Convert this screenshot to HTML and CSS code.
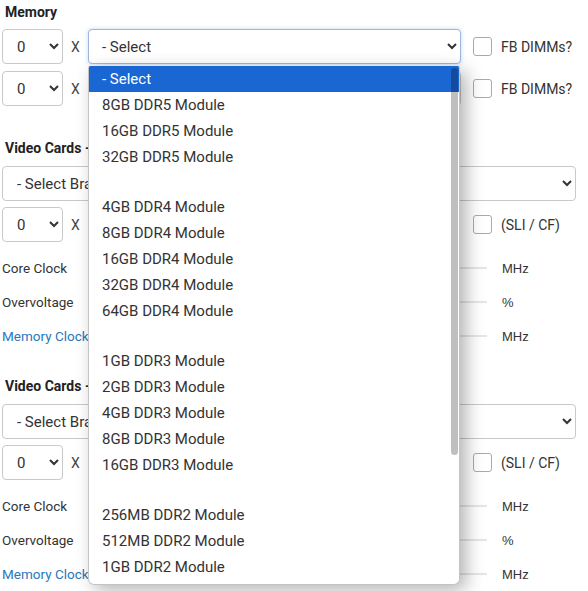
FILE: index.html
```html
<!DOCTYPE html>
<html lang="en">
<head>
  <meta charset="UTF-8">
  <title>PSU Calculator</title>
  <link rel="stylesheet" href="styles.css">
</head>
<body>
  <div class="calc">
    <section class="group group-memory">
      <h3 class="group-title">Memory</h3>
      <div class="part-row">
        <select class="qty"><option>0</option><option>1</option><option>2</option></select>
        <span class="times">X</span>
        <select class="part is-open"><option>- Select</option></select>
        <label class="check"><input type="checkbox"><span>FB DIMMs?</span></label>
      </div>
      <div class="part-row">
        <select class="qty"><option>0</option><option>1</option><option>2</option></select>
        <span class="times">X</span>
        <select class="part"><option>- Select</option></select>
        <label class="check"><input type="checkbox"><span>FB DIMMs?</span></label>
      </div>
    </section>

    <section class="group">
      <h3 class="group-title">Video Cards - 1</h3>
      <select class="brand"><option>- Select Brand -</option></select>
      <div class="part-row">
        <select class="qty"><option>0</option><option>1</option><option>2</option></select>
        <span class="times">X</span>
        <select class="part part-model"><option>- Select Model -</option></select>
        <label class="check"><input type="checkbox"><span>(SLI / CF)</span></label>
      </div>
      <div class="tune">
        <div class="tune-row"><span class="tune-label">Core Clock</span><input type="range" class="slider"><span class="unit">MHz</span></div>
        <div class="tune-row"><span class="tune-label">Overvoltage</span><input type="range" class="slider"><span class="unit">%</span></div>
        <div class="tune-row"><a href="#" class="tune-label link">Memory Clock</a><input type="range" class="slider"><span class="unit">MHz</span></div>
      </div>
    </section>

    <section class="group">
      <h3 class="group-title">Video Cards - 2</h3>
      <select class="brand"><option>- Select Brand -</option></select>
      <div class="part-row">
        <select class="qty"><option>0</option><option>1</option><option>2</option></select>
        <span class="times">X</span>
        <select class="part part-model"><option>- Select Model -</option></select>
        <label class="check"><input type="checkbox"><span>(SLI / CF)</span></label>
      </div>
      <div class="tune">
        <div class="tune-row"><span class="tune-label">Core Clock</span><input type="range" class="slider"><span class="unit">MHz</span></div>
        <div class="tune-row"><span class="tune-label">Overvoltage</span><input type="range" class="slider"><span class="unit">%</span></div>
        <div class="tune-row"><a href="#" class="tune-label link">Memory Clock</a><input type="range" class="slider"><span class="unit">MHz</span></div>
      </div>
    </section>
  </div>

  <!-- open option list of the first memory select -->
  <div class="menu">
    <div class="menu-item active">- Select</div>
    <div class="menu-item">8GB DDR5 Module</div>
    <div class="menu-item">16GB DDR5 Module</div>
    <div class="menu-item">32GB DDR5 Module</div>
    <div class="menu-item empty"></div>
    <div class="menu-item">4GB DDR4 Module</div>
    <div class="menu-item">8GB DDR4 Module</div>
    <div class="menu-item">16GB DDR4 Module</div>
    <div class="menu-item">32GB DDR4 Module</div>
    <div class="menu-item">64GB DDR4 Module</div>
    <div class="menu-item empty"></div>
    <div class="menu-item">1GB DDR3 Module</div>
    <div class="menu-item">2GB DDR3 Module</div>
    <div class="menu-item">4GB DDR3 Module</div>
    <div class="menu-item">8GB DDR3 Module</div>
    <div class="menu-item">16GB DDR3 Module</div>
    <div class="menu-item empty"></div>
    <div class="menu-item">256MB DDR2 Module</div>
    <div class="menu-item">512MB DDR2 Module</div>
    <div class="menu-item">1GB DDR2 Module</div>
    <div class="menu-thumb"></div>
  </div>
</body>
</html>
```

FILE: styles.css
```css
body {
  margin: 0;
  padding: 2px 0 0 2px;
  font-family: Roboto, "Liberation Sans", Arial, sans-serif;
  color: #333;
  background: #fff;
  overflow: hidden;
}

.calc {
  width: 574px;
}

.group {
  margin-bottom: 23px;
}

.group-memory {
  margin-bottom: 32px;
}

.group-title {
  margin: 0;
  padding-left: 3px;
  font-size: 14px;
  line-height: 20px;
  font-weight: bold;
  color: #222;
}

select {
  height: 35px;
  font-family: Roboto, "Liberation Sans", Arial, sans-serif;
  font-size: 15px;
  color: #333;
  background: #fff;
  border: 1px solid #c9c9c9;
  border-radius: 4px;
  padding: 0 0 0 9px;
  outline: none;
}

.brand {
  display: block;
  width: 574px;
  margin-top: 8px;
  padding-left: 10px;
}

.part-row {
  display: flex;
  align-items: center;
  margin-top: 7px;
}

.brand + .part-row {
  margin-top: 6px;
}

.qty {
  width: 61px;
  padding-left: 10px;
}

.times {
  width: 9px;
  margin: 0 8px;
  font-size: 14px;
  color: #444;
}

.part {
  width: 373px;
}

.part-model {
  width: 360px;
}

.part-model + .check {
  margin-left: 25px;
}

.part.is-open {
  border-color: #9db7da;
  box-shadow: 0 0 4px rgba(80, 140, 220, 0.35);
}

.check {
  display: flex;
  align-items: center;
  margin-left: 12px;
  font-size: 14px;
  color: #333;
}

.check input {
  appearance: none;
  width: 19px;
  height: 19px;
  margin: 0 9px 0 0;
  border: 1.5px solid #aaa;
  border-radius: 3px;
  background: #fff;
}

.tune {
  margin-top: 9px;
}

.tune-row {
  display: grid;
  grid-template-columns: 77px 393px auto;
  column-gap: 15px;
  align-items: center;
  height: 34px;
}

.tune-label {
  font-size: 13.5px;
  color: #333;
  white-space: nowrap;
}

.link {
  color: #2a78bd;
  text-decoration: none;
}

.slider {
  appearance: none;
  width: 100%;
  height: 2px;
  margin: 0;
  background: #e6e6e6;
}

.slider::-webkit-slider-thumb {
  appearance: none;
  width: 14px;
  height: 14px;
  border-radius: 50%;
  background: #2a78bd;
}

.unit {
  font-family: "Liberation Sans", Arial, sans-serif;
  font-size: 13px;
  color: #333;
}

/* the open dropdown list */
.menu {
  position: absolute;
  top: 66px;
  left: 88px;
  width: 370px;
  height: 518px;
  overflow: hidden;
  background: #fff;
  border: 1px solid #c4c4c4;
  border-top: none;
  border-radius: 2px 2px 6px 6px;
  box-shadow: 6px 5px 18px rgba(0, 0, 0, 0.3);
}

.menu-item {
  height: 26px;
  line-height: 26px;
  padding-left: 13px;
  font-size: 15px;
  color: #333;
  white-space: nowrap;
}

.menu-item.empty {
  height: 24px;
}

.menu-item.active {
  background: #1a66d2;
  color: #fff;
}

.menu-thumb {
  position: absolute;
  top: 2px;
  right: 1px;
  width: 7px;
  height: 387px;
  border-radius: 4px;
  background: rgba(0, 0, 0, 0.25);
}
```
